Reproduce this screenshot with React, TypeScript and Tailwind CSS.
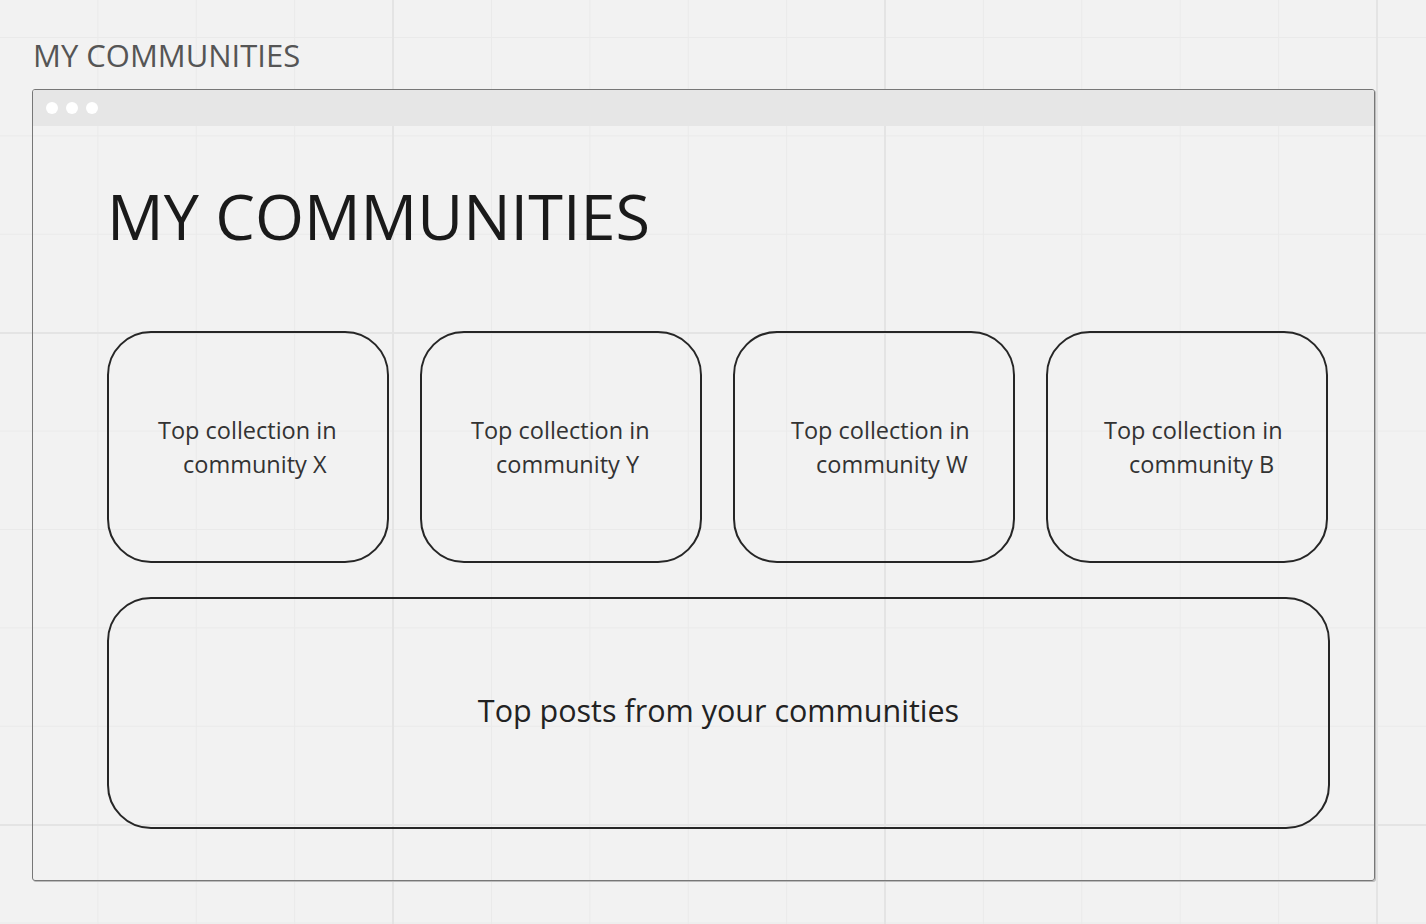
const cards = [
  { id: "x", name: "community X", pad: "pl-[49px]" },
  { id: "y", name: "community Y", pad: "pl-[49px]" },
  { id: "w", name: "community W", pad: "pl-[56px]" },
  { id: "b", name: "community B", pad: "pl-[56px]" },
];

export default function App() {
  return (
    <div
      className="w-[1426px] h-[924px] overflow-hidden bg-[#f2f2f2] bg-[linear-gradient(to_right,#e4e4e4_2px,transparent_2px),linear-gradient(to_bottom,#e4e4e4_2px,transparent_2px),linear-gradient(to_right,#eaeaea_1px,transparent_1px),linear-gradient(to_bottom,#eaeaea_1px,transparent_1px)] bg-[size:492px_492px,492px_492px,98.4px_98.4px,98.4px_98.4px] bg-[position:392px_332px,392px_332px,-1px_37px,-1px_37px] font-['Open_Sans',sans-serif]"
    >
      <div className="pl-[32px] pt-[36px]">
        {/* canvas label */}
        <h2 className="text-[31px] leading-[38px] text-[#555] pl-[1px]">MY COMMUNITIES</h2>

        {/* browser frame */}
        <div className="mt-[15px] w-[1343px] h-[792px] border border-[#777] rounded-[3px] shadow-[1px_1px_0_#bbb]">
          <div className="h-[36px] bg-[#e6e6e6] flex items-center gap-[8px] pl-[13px] rounded-t-[2px]">
            <span className="w-[12px] h-[12px] rounded-full bg-white" />
            <span className="w-[12px] h-[12px] rounded-full bg-white" />
            <span className="w-[12px] h-[12px] rounded-full bg-white" />
          </div>

          <div className="pl-[74px] pt-[55px]">
            <h1 className="text-[63px] leading-[70px] text-[#1a1a1a]">MY COMMUNITIES</h1>

            <div className="mt-[80px] flex gap-[31px]">
              {cards.map((c) => (
                <div
                  key={c.id}
                  className={`w-[282px] h-[232px] border-2 border-[#262626] rounded-[44px] flex flex-col justify-center ${c.pad}`}
                >
                  <div className="text-[23.5px] leading-[34px] text-[#333]">
                    <div>Top collection in</div>
                    <div className="pl-[25px]">{c.name}</div>
                  </div>
                </div>
              ))}
            </div>

            <div className="mt-[34px] w-[1223px] h-[232px] border-2 border-[#262626] rounded-[44px] flex items-center justify-center pb-[5px]">
              <span className="text-[30.5px] text-[#222]">Top posts from your communities</span>
            </div>
          </div>
        </div>
      </div>
    </div>
  );
}
